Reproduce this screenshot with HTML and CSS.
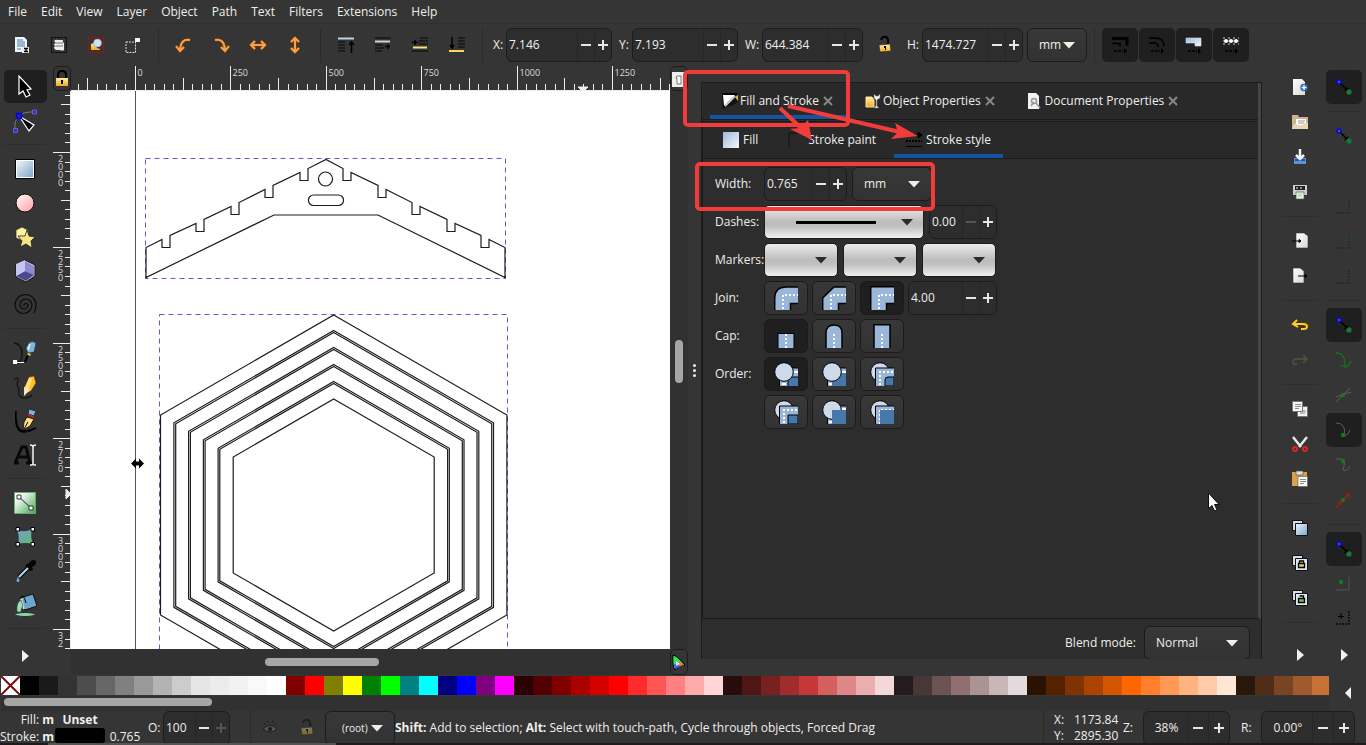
FILE: index.html
```html
<!DOCTYPE html>
<html lang="en">
<head>
<meta charset="utf-8">
<title>Inkscape</title>
<link rel="stylesheet" href="styles.css">
</head>
<body>
<svg class="defs" aria-hidden="true">
  <defs>
    <linearGradient id="g-blue" x1="0" y1="0" x2="1" y2="1"><stop offset="0" stop-color="#9db9db"/><stop offset="1" stop-color="#f4f8fc"/></linearGradient>
    <linearGradient id="g-rect" x1="0" y1="0" x2="1" y2="1"><stop offset="0" stop-color="#eef3f8"/><stop offset="1" stop-color="#7fa6cc"/></linearGradient>
    <linearGradient id="g-pink" x1="0" y1="0" x2="1" y2="1"><stop offset="0" stop-color="#fff"/><stop offset="1" stop-color="#ff9aa2"/></linearGradient>
    <linearGradient id="g-green" x1="0" y1="0" x2="1" y2="1"><stop offset="0.2" stop-color="#fff"/><stop offset="1" stop-color="#3fa64c"/></linearGradient>
    <linearGradient id="g-mesh" x1="0" y1="0" x2="1" y2="1"><stop offset="0" stop-color="#6fa0d8"/><stop offset="1" stop-color="#63b96a"/></linearGradient>
    <linearGradient id="g-gold" x1="0" y1="0" x2="0" y2="1"><stop offset="0" stop-color="#fff0a8"/><stop offset="1" stop-color="#f0a81c"/></linearGradient>
    <linearGradient id="g-page" x1="0" y1="0" x2="1" y2="1"><stop offset="0" stop-color="#fff"/><stop offset="1" stop-color="#d8d8d4"/></linearGradient>
  </defs>
  <symbol id="minus" viewBox="0 0 12 12"><path d="M1 6h10" stroke="currentColor" stroke-width="2"/></symbol>
  <symbol id="plus" viewBox="0 0 12 12"><path d="M1 6h10M6 1v10" stroke="currentColor" stroke-width="2"/></symbol>
  <symbol id="caret" viewBox="0 0 12 8"><path d="M0 1h12L6 7.500z" fill="currentColor"/></symbol>
  <symbol id="more" viewBox="0 0 24 24"><path d="M9 6l7 6-7 6z" fill="#f2f2f2"/></symbol>
  <symbol id="cross" viewBox="0 0 10 10"><path d="M1 1l8 8M9 1L1 9" stroke="#888" stroke-width="2"/></symbol>
  <symbol id="snap" viewBox="0 0 24 24"><path d="M9 9l7 7" stroke="#000" stroke-width="1.500"/><path d="M17 17l-5-1 4-4z"/><circle cx="7" cy="7" r="2" fill="#3a4fd0" stroke="#0a08d8" stroke-width="1.500"/><circle cx="17" cy="17" r="2" fill="#2f6a78" stroke="#107a1c" stroke-width="1.500"/></symbol>
  <symbol id="lock-open" viewBox="0 0 20 20"><path d="M6 5q1-4 5-3 3 1 2 7" fill="none" stroke="#000" stroke-width="2"/><path d="M4 10l11-1 1 7-11 1z" fill="url(#g-gold)" stroke="#222" stroke-width=".6"/><path d="M9 11h2v4h-1v-2h-1z" fill="#000"/></symbol>
  <symbol id="corner" viewBox="0 0 24 24"><path d="M4 19h13V6" fill="none" stroke="#262626" stroke-width="1.500" stroke-dasharray="2 1"/></symbol>
</svg>

<div class="app">
  <nav class="menubar">
    <button>File</button><button>Edit</button><button>View</button><button>Layer</button><button>Object</button><button>Path</button><button>Text</button><button>Filters</button><button>Extensions</button><button>Help</button>
  </nav>

  <div class="toolbar">
    <div class="icon-row">
      <button aria-label="Select all"><svg viewBox="0 0 24 24"><path d="M5 4h9l3 3v12H5z" fill="#f2f5f8"/><path d="M7 7h6M7 9h8M7 11h8M7 13h8M7 16h4" stroke="#7fa2ca" stroke-width="1.300"/><path d="M12 14h7v6h-7z" fill="#eee"/><path d="M14 15.500h4M14 18.500h4M16 15v4" stroke="#000" stroke-width="1.300"/></svg></button>
      <button aria-label="Select all in all layers"><svg viewBox="0 0 24 24"><path d="M4.500 4.500h15v15h-15z" fill="none" stroke="#000" stroke-dasharray="2 1"/><path d="M7 8q2-2 4-1h5q-1 2 1 3v7q-2 1-4 0H9q-2-1-2-3l2-1q-2 0-2-2l2-1z" fill="#eee"/><path d="M9 10h7M9 13h7" stroke="#777"/></svg></button>
      <button aria-label="Deselect"><svg viewBox="0 0 24 24"><path d="M4.500 4.500h15v15h-15z" fill="none" stroke="#d00000" stroke-dasharray="2 1"/><path d="M7 11l3-1 3 5 3 1v1H7z" fill="url(#g-gold)"/><circle cx="13.500" cy="10" r="4" fill="#d5e1f0" stroke="#8098b0" stroke-width=".5"/></svg></button>
      <button aria-label="Toggle selection"><svg viewBox="0 0 24 24"><path d="M5 9h9.500v10.500H5z" fill="none" stroke="#ddd" stroke-dasharray="2 1"/><path d="M14 5h5v4h-5z" fill="#f5f5f5"/></svg></button>
    </div>
    <i class="vsep"></i>
    <div class="icon-row orange">
      <button aria-label="Rotate left"><svg viewBox="0 0 24 24"><path class="edge-line" d="M18 7q-9-2-10 10M4 13l4 5 4-4"/><path d="M18 7q-9-2-10 10M4 13l4 5 4-4"/></svg></button>
      <button aria-label="Rotate right"><svg viewBox="0 0 24 24"><path class="edge-line" d="M6 7q9-2 10 10M12 14l4 4 4-5"/><path d="M6 7q9-2 10 10M12 14l4 4 4-5"/></svg></button>
      <button aria-label="Flip horizontal"><svg viewBox="0 0 24 24"><path class="edge-line" d="M5 12h14M9 8l-4 4 4 4M15 8l4 4-4 4"/><path d="M5 12h14M9 8l-4 4 4 4M15 8l4 4-4 4"/></svg></button>
      <button aria-label="Flip vertical"><svg viewBox="0 0 24 24"><path class="edge-line" d="M12 5v14M8 9l4-4 4 4M8 15l4 4 4-4"/><path d="M12 5v14M8 9l4-4 4 4M8 15l4 4 4-4"/></svg></button>
    </div>
    <i class="vsep"></i>
    <div class="icon-row">
      <button aria-label="Raise to top"><svg viewBox="0 0 24 24"><path d="M4 9h7M4 12h7M4 15h7M4 18h7" stroke="#1d1d1d" stroke-width="2"/><path d="M4 5.500h16" stroke="#bcd3ee" stroke-width="2"/><path d="M17.500 20V10M15 12l2.500-3 2.500 3" fill="none" stroke="#000" stroke-width="1.500"/></svg></button>
      <button aria-label="Raise"><svg viewBox="0 0 24 24"><path d="M4 5h16M4 12h8M4 15h9M4 18h7" stroke="#1d1d1d" stroke-width="2"/><path d="M4 8.500h15" stroke="#c9d6e4" stroke-width="2"/><path d="M14 13.500h5M17 11v5" stroke="#000" stroke-width="1.500"/></svg></button>
      <button aria-label="Lower"><svg viewBox="0 0 24 24"><path d="M12 5h8M11 8h9M11 11h9M4 18h16" stroke="#1d1d1d" stroke-width="2"/><path d="M5 14.500h14" stroke="#ffdf70" stroke-width="2"/><path d="M4 9.500h6M7 7v5" stroke="#000" stroke-width="1.500"/></svg></button>
      <button aria-label="Lower to bottom"><svg viewBox="0 0 24 24"><path d="M13 5h7M13 8h7M13 11h7M13 14h7" stroke="#1d1d1d" stroke-width="2"/><path d="M4 18h15" stroke="#ffd45e" stroke-width="2"/><path d="M7 4v10M5 12l2 3 2-3" fill="none" stroke="#000" stroke-width="1.500"/></svg></button>
    </div>
    <i class="vsep"></i>
    <div class="fields">
      <label for="fx">X:</label>
      <span class="spin w106"><input id="fx" value="7.146"><button aria-label="Decrease"><svg><use href="#minus"/></svg></button><button aria-label="Increase"><svg><use href="#plus"/></svg></button></span>
      <label for="fy">Y:</label>
      <span class="spin w106"><input id="fy" value="7.193"><button aria-label="Decrease"><svg><use href="#minus"/></svg></button><button aria-label="Increase"><svg><use href="#plus"/></svg></button></span>
      <label for="fw" class="wide">W:</label>
      <span class="spin w101"><input id="fw" value="644.384"><button aria-label="Decrease"><svg><use href="#minus"/></svg></button><button aria-label="Increase"><svg><use href="#plus"/></svg></button></span>
      <button class="ratio" aria-label="Lock ratio"><svg><use href="#lock-open"/></svg></button>
      <label for="fh" class="height">H:</label>
      <span class="spin w101"><input id="fh" value="1474.727"><button aria-label="Decrease"><svg><use href="#minus"/></svg></button><button aria-label="Increase"><svg><use href="#plus"/></svg></button></span>
      <span class="combo unit"><select aria-label="Unit"><option>mm</option></select><svg class="caret"><use href="#caret"/></svg></span>
    </div>
    <i class="vsep"></i>
    <div class="toggles">
      <button aria-label="Scale stroke"><svg viewBox="0 0 24 24"><path d="M4 5.500h15v7" fill="none" stroke="#000" stroke-width="3"/><path d="M4 10.500h8v3" fill="none" stroke="#000" stroke-width="1.500"/><path d="M6 18h9" stroke="#000" stroke-width="1.500" stroke-dasharray="3 1"/><path d="M16 15l3 3-3 3z"/></svg></button>
      <button aria-label="Scale corners"><svg viewBox="0 0 24 24"><path d="M4 5h6q9 0 9 8M4 10h5q4 0 4 4" fill="none" stroke="#000" stroke-width="1.500"/><path d="M6 18h9" stroke="#000" stroke-width="1.500" stroke-dasharray="3 1"/><path d="M16 15l3 3-3 3z"/></svg></button>
      <button aria-label="Move gradients"><svg viewBox="0 0 24 24"><path d="M4 5h15v8h-6v-3H4z" fill="url(#g-blue)" stroke="#cfe0f2" stroke-width=".6"/><path d="M6 18h9" stroke="#000" stroke-width="1.500" stroke-dasharray="3 1"/><path d="M16 15l3 3-3 3z"/></svg></button>
      <button aria-label="Move patterns"><svg viewBox="0 0 24 24"><path d="M4 5h16M4 11h16" stroke="#ccc" stroke-dasharray="2 3"/><path d="M4 8h16" stroke="#bbb"/><g fill="#fff"><circle cx="7" cy="8" r="2"/><circle cx="12" cy="8" r="2"/><circle cx="17" cy="8" r="2"/></g><path d="M6 18h9" stroke="#000" stroke-width="1.500" stroke-dasharray="3 1"/><path d="M16 15l3 3-3 3z"/></svg></button>
    </div>
  </div>

  <main class="workspace">
    <div class="toolbox">
      <button class="on" aria-label="Selector"><svg viewBox="0 0 24 24"><path d="M6 1v18l4-3 3 6 4-2-3-5 4-1z" fill="#000" stroke="#fff" stroke-width="1.200"/></svg></button>
      <button aria-label="Node"><svg viewBox="0 0 24 24"><path d="M2 21Q0 2 21 3" fill="none" stroke="#777"/><path d="M6 7l15 9-5 6z" fill="#000" stroke="#fff" stroke-width="1.200"/><path d="M3.500 4.500h5v5h-5z" fill="#2424a0" stroke="#0000e8" stroke-width="1.500"/><path d="M19.500 1h4v4h-4zM.5 19.500h4v4h-4z" fill="#333a90" stroke="#6060f0"/></svg></button>
      <i class="hsep"></i>
      <button aria-label="Rectangle"><svg viewBox="0 0 24 24"><path d="M2.500 2.500h19v19h-19z" fill="#fff" stroke="#000"/><path d="M4 4h16v16H4z" fill="url(#g-rect)"/></svg></button>
      <button aria-label="Ellipse"><svg viewBox="0 0 24 24"><circle cx="12" cy="12" r="9" fill="url(#g-pink)" stroke="#111"/></svg></button>
      <button aria-label="Star"><svg viewBox="0 0 24 24"><path d="M3 5l6-3 6 3 1 6-6 5-7-3z" fill="#fff2a0" stroke="#222" stroke-width=".7"/><path d="M14 5l2 6 6 1-4 4 1 7-6-4-6 3 2-6-4-5 7 0z" fill="#f7e487" stroke="#222" stroke-width=".8"/></svg></button>
      <button aria-label="3D box"><svg viewBox="0 0 24 24"><path d="M3 5l9-4 10 5v11l-9 6-10-5z" fill="#dadaf6" stroke="#111"/><path d="M12 2l9 5v9l-9-4z" fill="#8c8ccd"/><path d="M3 17l9-5 9 4-8 6z" fill="#4a4a8c"/><path d="M3 5l9-4v11l-9 5z" fill="#c4c4ee"/></svg></button>
      <button aria-label="Spiral"><svg viewBox="0 0 24 24"><path d="M11 13a2 2 0 0 1 4-1a4 4 0 0 1-8 0a6 6 0 0 1 12 0a8.500 8.500 0 0 1-17 0a10.500 10.500 0 0 1 21 0q0 4-2 8" fill="none" stroke="#0c0c0c" stroke-width="1.200"/></svg></button>
      <i class="hsep"></i>
      <button aria-label="Pen"><svg viewBox="0 0 24 24"><path d="M1 2q8 1 8 10t-4 10" fill="none" stroke="#111" stroke-width="1.500"/><path d="M16 2q3-3 7 0l-2 9-6 1-2-5z" fill="#7fb6d8" stroke="#1b3a50" stroke-width=".6"/><path d="M17 3l-2 6" stroke="#e8f6ff" stroke-width="1.500"/><path d="M15 12l3 1-1 2-3-1z" fill="#ffc42c"/><path d="M15 14l-3 7" stroke="#000" stroke-width="2"/><path d="M2 21.500h9" stroke="#fff"/><path d="M0 19h4v4H0z" fill="#fff"/></svg></button>
      <button aria-label="Pencil"><svg viewBox="0 0 24 24"><path d="M1 4q6-2 4 2t1 8q-2 8 5 9 5 0 8-3" fill="none" stroke="#111" stroke-width="1.200"/><path d="M16 2l5-1 2 7-5 8-7 3 0-6z" fill="#ffbe2e" stroke="#5c3300" stroke-width=".6"/><path d="M16 3l-4 10 4 1 3-10z" fill="#ffe37a"/><path d="M11 12l6 3-6 6z" fill="#f9e6bc"/></svg></button>
      <button aria-label="Calligraphy"><svg viewBox="0 0 24 24"><path d="M3 2q-1 20 8 20 6 0 12-3-6 4-12 4Q1 23 3 2z" fill="#000" stroke="#000" stroke-width="1.500"/><path d="M16 0l7 2-2 5-6-2z" fill="#7fb2d8" stroke="#134"/><path d="M15 6l6 2" stroke="#d01c1c" stroke-width="2"/><path d="M14 8l7 2-4 7-7 4 1-8z" fill="#ffe18a" stroke="#2d1c00"/><path d="M11 20l4-7" stroke="#000"/></svg></button>
      <button aria-label="Text"><svg viewBox="0 0 24 24"><path d="M2 20l7-16h4l4 16M6 14h9M1 20h5M13 20h6" fill="none" stroke="#080808" stroke-width="3"/><path d="M17 2q3 0 3 2v17q0 1-3 1M23 2q-3 0-3 2M23 22q-3 0-3-1" fill="none" stroke="#f5f5f5" stroke-width="1.500"/></svg></button>
      <i class="hsep"></i>
      <button aria-label="Gradient"><svg viewBox="0 0 24 24"><path d="M1.500 1.500h21v21h-21z" fill="url(#g-green)" stroke="#5fae69"/><path d="M6 6l12 11" stroke="#222"/><path d="M4 4h4v4H4zM16 15h4v4h-4z" fill="#fff" stroke="#333"/></svg></button>
      <button aria-label="Mesh"><svg viewBox="0 0 24 24"><path d="M4 5q8 3 15-1-2 8 1 15-8-2-15 0 2-7-1-14z" fill="url(#g-mesh)"/><path d="M3 2.500h3.500V6H3zM18 2.500h3.500V6H18zM3 17.500h3.500V21H3zM18 17.500h3.500V21H18z" fill="#fff" stroke="#000"/></svg></button>
      <button aria-label="Dropper"><svg viewBox="0 0 24 24"><path d="M16 4q3-5 7-2 1 4-4 6l1 3-3 1-5-5 2-2z" fill="#050505"/><path d="M15 9L6 18" stroke="#000" stroke-width="4"/><path d="M15 9L6 18" stroke="#b8d8f0" stroke-width="2"/><path d="M5 18q-3 5 0 5t0-5z" fill="#6fa8e0"/></svg></button>
      <button aria-label="Bucket"><svg viewBox="0 0 24 24"><ellipse cx="12" cy="21.500" rx="10" ry="2" fill="#8fd49c" stroke="#234"/><path d="M7 5l13-4 4 12-12 4z" fill="#6fa5c8" stroke="#111"/><path d="M8 6l3 10" stroke="#cfe8f4" stroke-width="2"/><path d="M8 7q-5 2-4 12h4q0-4 2-6z" fill="#9fe0a8" stroke="#234" stroke-width=".6"/><path d="M8 5q2-6 5 5" fill="none" stroke="#000"/></svg></button>
      <i class="hsep"></i>
      <button class="more" aria-label="More tools"><svg viewBox="0 0 24 24"><use href="#more"/></svg></button>
    </div>

    <section class="canvas-area">
      <button class="mini" aria-label="Lock guides"><svg viewBox="0 0 16 20"><path d="M4 10V6q0-4 4-4t4 4v4" fill="none" stroke="#000" stroke-width="2"/><path d="M2 9h12v8H2z" fill="url(#g-gold)"/><path d="M7 11h2v4H7z"/></svg></button>
      <svg class="ruler-x" id="ruler-x" role="img" aria-label="Horizontal ruler"></svg>
      <button class="mini" aria-label="Toggle page"><svg viewBox="0 0 16 20"><path d="M1 3h15v15H1z" fill="#eee"/><path d="M6 7h4v8H6V9H5V8z" fill="#fff" stroke="#777"/></svg></button>
      <svg class="ruler-y" id="ruler-y" role="img" aria-label="Vertical ruler"></svg>
      <div class="canvas">
        <svg viewBox="71 91 599 558" width="599" height="558">
          <path d="M135.500 91v558" stroke="#555"/>
          <g fill="none" stroke="#5a5ad8" stroke-dasharray="5 4"><path d="M145.500 158.500h360v120h-360z"/><path d="M159.500 314.500h348v400h-348z"/></g>
          <g fill="none" stroke="#1c1c1c" stroke-width="1.200">
            <path d="M146 277.500v-30l16-8v8h8v-12l26-12v8h8v-12l27-13v8h8v-12l26-13v8h8v-12l27-13v8h8v-12l18-9 17 9v12h8v-8l27 13v12h8v-8l26 13v12h8v-8l27 13v12h8v-8l26 12v12h8v-8l16 8v30L378 215H274z"/>
            <circle cx="325.500" cy="179" r="7"/><rect x="308.500" y="195" width="35" height="10.500" rx="5"/>
            <g id="hexagons"></g>
          </g>
          <path d="M131 463.500l5-5v3h3v-3l5 5-5 5v-3h-3v3z"/>
        </svg>
      </div>
      <div class="vscroll"><i></i></div>
      <span></span>
      <div class="hscroll"><i></i></div>
      <button class="mini cms" aria-label="Color management"><svg viewBox="0 0 16 20"><path d="M2 3q3 0 12 10-9 1-10 5-3-4-2-15z" fill="#35e05a" stroke="#000"/><path d="M8 9l5 4-6 2z" fill="#ff6a3a"/><path d="M3 12l5 0 0 3-4 2z" fill="#574dff"/><path d="M5 9l4 3-4 2z" fill="#b6ffea"/></svg></button>
    </section>

    <div class="splitter"><i></i><i></i><i></i></div>

    <aside class="dock">
      <div class="notebook">
        <div class="tabs">
          <div class="tab active"><button><svg viewBox="0 0 16 16"><path d="M0 0h16L1 16z" fill="#000"/><path d="M1 2h12L2 13z" fill="#fff"/><path d="M3 14L13 3l3 0v6q-5 4-13 5z" fill="#111"/><path d="M3 13L13 3" stroke="#ccc" stroke-width="2"/><path d="M13 4l3-2v6z" fill="#f3b229"/></svg>Fill and Stroke</button><button class="close" aria-label="Close"><svg><use href="#cross"/></svg></button></div>
          <div class="tab"><button><svg viewBox="0 0 16 16"><path d="M1 4h6l2 3v7H1z" fill="url(#g-gold)" stroke="#f7e6a6"/><path d="M9 1v4l2 2v6l-2 2h5l-2-2V7l3-2V1l-2 2h-2z" fill="#eee" stroke="#666" stroke-width=".5"/></svg>Object Properties</button><button class="close" aria-label="Close"><svg><use href="#cross"/></svg></button></div>
          <div class="tab"><button><svg viewBox="0 0 16 16"><path d="M1 0h8l3 3v13H1z" fill="#f2f2f2"/><circle cx="7" cy="8" r="2.500" fill="none" stroke="#999" stroke-width="1.500"/><path d="M9 10l4 5M4 13l3-4" stroke="#999" stroke-width="1.500"/></svg>Document Properties</button><button class="close" aria-label="Close"><svg><use href="#cross"/></svg></button></div>
        </div>
        <div class="page">
          <div class="subtabs">
            <button><svg viewBox="0 0 16 16"><path d="M0 0h16v16H0z" fill="url(#g-blue)"/></svg>Fill</button>
            <button><svg viewBox="0 0 16 16"><path d="M1 15V1h14" fill="none" stroke="#101010"/></svg>Stroke paint</button>
            <button class="active"><svg viewBox="0 0 16 16"><path d="M0 3h14M12 0l4 3-4 3z" stroke="#000"/><path d="M0 9h16" stroke="#000" stroke-width="2" stroke-dasharray="2 1"/><path d="M0 14.500h16" stroke="#000"/></svg>Stroke style</button>
          </div>
          <div class="style-form">
            <div class="frow"><label for="sw">Width:</label>
              <span class="spin w83"><input id="sw" value="0.765"><button aria-label="Decrease"><svg><use href="#minus"/></svg></button><button aria-label="Increase"><svg><use href="#plus"/></svg></button></span>
              <span class="combo w80"><select aria-label="Width unit"><option>mm</option></select><svg class="caret"><use href="#caret"/></svg></span></div>
            <div class="frow"><label for="dash">Dashes:</label>
              <button class="light dash" id="dash"><i></i><svg class="caret"><use href="#caret"/></svg></button>
              <span class="spin w68"><input aria-label="Dash offset" value="0.00"><button class="off" aria-label="Decrease"><svg><use href="#minus"/></svg></button><button aria-label="Increase"><svg><use href="#plus"/></svg></button></span></div>
            <div class="frow"><label for="mk">Markers:</label>
              <button class="light" id="mk" aria-label="Start marker"><svg class="caret"><use href="#caret"/></svg></button>
              <button class="light" aria-label="Mid marker"><svg class="caret"><use href="#caret"/></svg></button>
              <button class="light" aria-label="End marker"><svg class="caret"><use href="#caret"/></svg></button></div>
            <div class="frow tight"><label for="jn">Join:</label>
              <button class="opt" id="jn" aria-label="Round join"><svg viewBox="0 0 24 24"><path d="M1 24V12Q1 1 12 1h12v17h-7v6z" fill="#9ab6d8"/><path d="M.7 24V12Q1 1 12 1h12M24 17.500h-7.500V24" fill="none" stroke="#000" stroke-width="1.500"/><path d="M9 23V9h15" fill="none" stroke="#fff" stroke-width="2" stroke-dasharray="2 2"/></svg></button>
              <button class="opt" aria-label="Bevel join"><svg viewBox="0 0 24 24"><path d="M1 24V12L12 1h12v17h-7v6z" fill="#9ab6d8"/><path d="M.7 24V12L12 1h12M24 17.500h-7.500V24" fill="none" stroke="#000" stroke-width="1.500"/><path d="M9 23V9h15" fill="none" stroke="#fff" stroke-width="2" stroke-dasharray="2 2"/></svg></button>
              <button class="opt on" aria-label="Miter join"><svg viewBox="0 0 24 24"><path d="M1 24V1h23v17h-7v6z" fill="#9ab6d8"/><path d="M.7 24V.7H24M24 17.500h-7.500V24" fill="none" stroke="#000" stroke-width="1.500"/><path d="M9 23V9h15" fill="none" stroke="#fff" stroke-width="2" stroke-dasharray="2 2"/></svg></button>
              <span class="spin w89"><input aria-label="Miter limit" value="4.00"><button aria-label="Decrease"><svg><use href="#minus"/></svg></button><button aria-label="Increase"><svg><use href="#plus"/></svg></button></span></div>
            <div class="frow tight"><label for="cp">Cap:</label>
              <button class="opt on" id="cp" aria-label="Butt cap"><svg viewBox="0 0 24 24"><path d="M4 24V9.500h16V24" fill="#9ab6d8" stroke="#000"/><path d="M12 10v14" stroke="#fff" stroke-width="2" stroke-dasharray="2 2"/></svg></button>
              <button class="opt" aria-label="Round cap"><svg viewBox="0 0 24 24"><path d="M4 24V9Q4 1 12 1t8 8v15" fill="#9ab6d8" stroke="#000" stroke-width="1.500"/><path d="M12 10v14" stroke="#fff" stroke-width="2" stroke-dasharray="2 2"/></svg></button>
              <button class="opt" aria-label="Square cap"><svg viewBox="0 0 24 24"><path d="M4 24V.7h16V24" fill="#9ab6d8" stroke="#000" stroke-width="1.500"/><path d="M12 10v14" stroke="#fff" stroke-width="2" stroke-dasharray="2 2"/></svg></button></div>
            <div class="frow tight"><label for="or">Order:</label>
              <button class="opt on" id="or" aria-label="Fill, stroke, markers"><svg viewBox="0 0 24 24"><path d="M5.500 24V6H24v18z" fill="#9ab6d8"/><path d="M5.500 24V6H24" fill="none" stroke="#000"/><path d="M8 22h4M20 10h4" stroke="#fff" stroke-width="2"/><path d="M14 24v-9h10v9z" fill="#4877ab"/><path d="M14 24v-9h10" fill="none" stroke="#000"/><circle cx="10" cy="10" r="9.300" fill="#cddaea" stroke="#000"/></svg></button>
              <button class="opt" aria-label="Stroke, fill, markers"><svg viewBox="0 0 24 24"><path d="M5.500 24V6H24v18z" fill="#9ab6d8"/><path d="M5.500 24V6H24" fill="none" stroke="#000"/><path d="M7 22h3M20 10h4" stroke="#fff" stroke-width="2"/><path d="M10 11h14v13H10z" fill="#4877ab"/><circle cx="10" cy="10" r="9.300" fill="#cddaea" stroke="#000"/></svg></button>
              <button class="opt" aria-label="Fill, markers, stroke"><svg viewBox="0 0 24 24"><circle cx="10" cy="10" r="9.300" fill="#cddaea" stroke="#000"/><path d="M5.500 24V6H24v18z" fill="#9ab6d8"/><path d="M5.500 24V6H24" fill="none" stroke="#000"/><path d="M10 23V10h14" fill="none" stroke="#fff" stroke-width="2" stroke-dasharray="2 2"/><path d="M15 24v-6q0-3 3-3h6v9z" fill="#4877ab" stroke="#000"/></svg></button></div>
            <div class="frow tight"><span></span>
              <button class="opt" aria-label="Markers, fill, stroke"><svg viewBox="0 0 24 24"><circle cx="10" cy="10" r="9.300" fill="#cddaea" stroke="#000"/><path d="M5.500 24V6H24v18z" fill="#9ab6d8"/><path d="M5.500 24V6H24" fill="none" stroke="#000"/><path d="M10 23V10h14" fill="none" stroke="#fff" stroke-width="2" stroke-dasharray="2 2"/><path d="M14 24v-9h10v9z" fill="#4877ab" stroke="#000"/></svg></button>
              <button class="opt" aria-label="Stroke, markers, fill"><svg viewBox="0 0 24 24"><path d="M5.500 24V6H24v18z" fill="#9ab6d8"/><path d="M5.500 24V6H24" fill="none" stroke="#000"/><path d="M7 22h3M20 9h4" stroke="#fff" stroke-width="2"/><circle cx="10" cy="10" r="9.300" fill="#cddaea" stroke="#000"/><path d="M10 10h14v14H10z" fill="#4877ab"/></svg></button>
              <button class="opt" aria-label="Markers, stroke, fill"><svg viewBox="0 0 24 24"><circle cx="10" cy="10" r="9.300" fill="#cddaea" stroke="#000"/><path d="M5.500 24V6H24v18z" fill="#9ab6d8"/><path d="M5.500 24V6H24" fill="none" stroke="#000"/><path d="M9.500 24V9.500H24" fill="none" stroke="#fff" stroke-dasharray="2 2"/><path d="M10 10h14v14H10z" fill="#4877ab"/></svg></button></div>
          </div>
        </div>
      </div>
      <div class="blend"><label for="blend">Blend mode:</label><span class="combo w106"><select id="blend"><option>Normal</option></select><svg class="caret"><use href="#caret"/></svg></span></div>
    </aside>

    <div class="commands">
      <button aria-label="New"><svg viewBox="0 0 24 24"><path d="M5 4h9l3 3v13H5z" fill="url(#g-page)"/><circle cx="16" cy="12.500" r="3.700" fill="#2d68b5"/><path d="M13.500 12.500h5M16 10v5" stroke="#fff" stroke-width="1.300"/></svg></button>
      <button aria-label="Open"><svg viewBox="0 0 24 24"><path d="M4 5h6l1 2h9v12H4z" fill="#c9b48f"/><path d="M8 9h10v6H8z" fill="#fff"/><path d="M10 11h7M10 13h6" stroke="#999"/><path d="M4 19l2-5h3v1h6l1-2h4v6z" fill="#e8d6b5"/></svg></button>
      <button aria-label="Save"><svg viewBox="0 0 24 24"><path d="M6 13h12v6H6z" fill="#5b93d8"/><path d="M7 14h10v2H7z" fill="#24589c"/><path d="M12 4v9M8 10l4 4 4-4" fill="none" stroke="#f2f2f2" stroke-width="2.500"/></svg></button>
      <button aria-label="Print"><svg viewBox="0 0 24 24"><path d="M5 5h14v10H5z" fill="#cfcfcf"/><path d="M7 6h10v4H7z" fill="#222"/><path d="M8 8h2M12 8h2" stroke="#fff"/><path d="M8 12h8v7H8z" fill="#eef5e4" stroke="#555" stroke-width=".7"/><path d="M10 14h4M9 16h5" stroke="#9dcf86"/></svg></button>
      <i class="hsep"></i>
      <button aria-label="Import"><svg viewBox="0 0 24 24"><path d="M8 4h8l4 3v12H8z" fill="url(#g-page)" stroke="#333" stroke-width=".6"/><path d="M4 12h9M11 10.500l2 1.500-2 1.500z" stroke="#000"/></svg></button>
      <button aria-label="Export"><svg viewBox="0 0 24 24"><path d="M5 4h7l4 3v12H5z" fill="url(#g-page)" stroke="#333" stroke-width=".6"/><path d="M10 12h9M17 10.500l2 1.500-2 1.500z" stroke="#000"/></svg></button>
      <i class="hsep"></i>
      <button aria-label="Undo"><svg viewBox="0 0 24 24"><path d="M9 7l-4 4 5 3M5 11h10q4 0 4 2.500T15 16h-2" fill="none" stroke="#4f3c00" stroke-width="3.500"/><path d="M9 7l-4 4 5 3M5 11h10q4 0 4 2.500T15 16h-2" fill="none" stroke="#f5cf36" stroke-width="2"/></svg></button>
      <button aria-label="Redo"><svg viewBox="0 0 24 24"><path d="M15 7l4 4-4 4M19 11H9q-4 0-4 3t4 2" fill="none" stroke="#48583e" stroke-width="1.500"/></svg></button>
      <i class="hsep"></i>
      <button aria-label="Copy"><svg viewBox="0 0 24 24"><path d="M9.500 9.500h10v10h-10z" fill="#f2f2f0" stroke="#777"/><path d="M12 14h6M12 16h5" stroke="#888"/><path d="M4.500 4.500h10v10h-10z" fill="#f8f8f6" stroke="#777"/><path d="M7 7.500h6M7 9.500h6M7 11.500h4" stroke="#888"/></svg></button>
      <button aria-label="Cut"><svg viewBox="0 0 24 24"><path d="M5 5l8 10M19 5l-8 10" stroke="#e8e8e8" stroke-width="2.500"/><circle cx="7" cy="17" r="2" fill="none" stroke="#e02424" stroke-width="2"/><circle cx="17" cy="17" r="2" fill="none" stroke="#e02424" stroke-width="2"/></svg></button>
      <button aria-label="Paste"><svg viewBox="0 0 24 24"><path d="M4 5h15v14H4z" fill="#d9a04c"/><path d="M8 4h7v4H8z" fill="#ddd" stroke="#555" stroke-width=".7"/><path d="M10 9.500h9.500v10H10z" fill="#fafaf8" stroke="#666" stroke-width=".7"/><path d="M12 12.500h6M12 14.500h6M12 16.500h4" stroke="#888"/></svg></button>
      <i class="hsep"></i>
      <button aria-label="Duplicate"><svg viewBox="0 0 24 24"><path d="M4.500 4.500h10v10h-10z" fill="#cfdff0" stroke="#111"/><path d="M7.500 7.500h12v12h-12z" fill="url(#g-rect)" stroke="#111"/></svg></button>
      <button aria-label="Clone"><svg viewBox="0 0 24 24"><path d="M4.500 4.500h10v10h-10z" fill="#cfdff0" stroke="#111"/><path d="M7.500 7.500h12v12h-12z" fill="#dbe8f5" stroke="#111"/><path d="M11.500 13v-3h4v3M10.500 12.500h6v4h-6z" fill="#f4c944" stroke="#000" stroke-width="1.300"/></svg></button>
      <button aria-label="Unlink clone"><svg viewBox="0 0 24 24"><path d="M4.500 4.500h10v10h-10z" fill="#cfdff0" stroke="#111"/><path d="M7.500 7.500h12v12h-12z" fill="#dbe8f5" stroke="#111"/><path d="M11.500 10h4v3" fill="none" stroke="#000" stroke-width="1.300"/><path d="M10.500 12.500h6v4h-6z" fill="#76c043" stroke="#000" stroke-width="1.300"/></svg></button>
      <i class="hsep"></i>
      <button class="more" aria-label="More commands"><svg><use href="#more"/></svg></button>
    </div>

    <div class="snapbar">
      <button class="on" aria-label="Snapping"><svg><use href="#snap"/></svg></button>
      <i class="hsep"></i>
      <button aria-label="Snap bounding boxes"><svg><use href="#snap"/></svg></button>
      <button aria-label="Snap edges"><svg viewBox="0 0 24 24"><path d="M4 17h13V3" fill="none" stroke="#2a3d2a" stroke-dasharray="2 1"/></svg></button>
      <button aria-label="Snap corners"><svg viewBox="0 0 24 24"><use href="#corner"/><circle cx="17" cy="18" r="2" fill="none" stroke="#1f4a25"/></svg></button>
      <button aria-label="Snap edge midpoints"><svg viewBox="0 0 24 24"><use href="#corner"/><circle cx="17" cy="9" r="2" fill="none" stroke="#1f4a25"/></svg></button>
      <button aria-label="Snap centers"><svg viewBox="0 0 24 24"><use href="#corner"/><circle cx="8" cy="9" r="1.500" fill="#1f4a25"/></svg></button>
      <i class="hsep"></i>
      <button class="on" aria-label="Snap nodes"><svg><use href="#snap"/></svg></button>
      <button aria-label="Snap paths"><svg viewBox="0 0 24 24"><path d="M4 5q10 0 9 14 4 0 6-6M8 17l5 2" fill="none" stroke="#18721f" stroke-width="1.300"/></svg></button>
      <button aria-label="Snap intersections"><svg viewBox="0 0 24 24"><path d="M4 19L18 5M4 14l15-5" stroke="#5e5e5e"/><circle cx="11" cy="12" r="2" fill="#147a20"/></svg></button>
      <button class="on" aria-label="Snap cusp nodes"><svg viewBox="0 0 24 24"><path d="M4 5q11 0 8 13 5-1 6-6" fill="none" stroke="#5e5e5e"/><circle cx="11" cy="17" r="2.200" fill="#147a20"/></svg></button>
      <button aria-label="Snap smooth nodes"><svg viewBox="0 0 24 24"><path d="M4 6h6q4 2 1 11 4 2 7-4" fill="none" stroke="#5e5e5e"/><circle cx="11" cy="8" r="2.200" fill="#147a20"/></svg></button>
      <button aria-label="Snap line midpoints"><svg viewBox="0 0 24 24"><path d="M4 19L18 5" stroke="#555"/><path d="M5 19l4-7M8 18l2-5M13 11l2-6M16 10l2-6" stroke="#a11616" stroke-width="1.300"/><circle cx="11" cy="12" r="2" fill="#147a20"/></svg></button>
      <i class="hsep"></i>
      <button class="on" aria-label="Snap others"><svg><use href="#snap"/></svg></button>
      <button aria-label="Snap object centers"><svg viewBox="0 0 24 24"><path d="M4 18h13V5" fill="none" stroke="#555"/><circle cx="9" cy="10" r="2.200" fill="#147a20"/></svg></button>
      <button aria-label="Snap rotation centers"><svg viewBox="0 0 24 24"><path d="M4 17h13V4" fill="none" stroke="#080808" stroke-width="1.500" stroke-dasharray="2 1"/><path d="M6 9.500h6M9 6v6" stroke="#000"/></svg></button>
      <button class="more" aria-label="More snapping"><svg><use href="#more"/></svg></button>
    </div>
  </main>

  <div class="palette">
    <div class="swatches" id="swatches"></div>
    <button aria-label="Palette menu"><svg viewBox="0 0 8 14"><path d="M7 1v12L1 7z" fill="#f2f2f2"/></svg></button>
    <div class="pscroll"><i></i></div>
  </div>

  <footer class="status">
    <div class="paint"><span>Fill: <b>m</b></span><b class="unset">Unset</b><i></i><span>Stroke: <b>m</b></span><i class="chip"></i><span class="sw">0.765</span></div>
    <label for="op">O:</label>
    <span class="spin w67"><input id="op" value="100"><button aria-label="Decrease"><svg><use href="#minus"/></svg></button><button class="off" aria-label="Increase"><svg><use href="#plus"/></svg></button></span>
    <i class="vsep"></i>
    <button class="flat" aria-label="Layer visibility"><svg viewBox="0 0 20 20"><path d="M3 11q7-7 14 0-7 6-14 0z" fill="#555" stroke="#1f1f1f"/><circle cx="10" cy="11" r="2" fill="#1a1a1a"/><path d="M5 7L4 5M8 5V3M12 5l1-2M15 7l1-2" stroke="#1f1f1f"/></svg></button>
    <button class="flat dim" aria-label="Layer lock"><svg><use href="#lock-open"/></svg></button>
    <span class="combo layer"><select aria-label="Layer"><option>(root)</option></select><svg class="caret"><use href="#caret"/></svg></span>
    <p><b>Shift:</b> Add to selection; <b>Alt:</b> Select with touch-path, Cycle through objects, Forced Drag</p>
    <i class="vsep"></i>
    <div class="coords"><span>X:</span><span>1173.84</span><span>Y:</span><span>2895.30</span></div>
    <label for="zm">Z:</label>
    <span class="spin big w87"><input id="zm" value="38%"><button aria-label="Zoom out"><svg><use href="#minus"/></svg></button><button aria-label="Zoom in"><svg><use href="#plus"/></svg></button></span>
    <label for="rt">R:</label>
    <span class="spin big w94"><input id="rt" value="0.00°"><button aria-label="Rotate left"><svg><use href="#minus"/></svg></button><button aria-label="Rotate right"><svg><use href="#plus"/></svg></button></span>
  </footer>
  <div class="edge"></div>

  <svg class="annotations" viewBox="0 0 1366 745" aria-hidden="true">
    <g fill="none" stroke="#f23c3c" stroke-width="4"><rect x="685" y="72" width="163" height="53" rx="3"/><rect x="697" y="164" width="236" height="45" rx="3"/><path d="M780 108l22 21M788 106l112 26"/></g>
    <g fill="#f23c3c"><path d="M812 140l-22-11 10-1 8-8z"/><path d="M918 136l-27 3 7-7-3-9z"/></g>
    <path d="M1208.500 493v15.500l3.500-3 2.500 5.500 2.500-1-2.500-5.500h4.500z" fill="#fff" stroke="#111"/>
  </svg>
</div>
<script src="app.js"></script>
</body>
</html>
```

FILE: styles.css
```css
* { box-sizing: border-box; }
body { margin: 0; background: #353535; color: #eeeeec; font: 12px/16px "Open Sans", "Noto Sans", sans-serif; }
button, input, select { font: inherit; color: inherit; margin: 0; padding: 0; border: 0; background: none; }
button { display: flex; align-items: center; justify-content: center; }
i { display: block; }
p { margin: 0; }
.defs { position: absolute; width: 0; height: 0; }
.app { position: relative; display: flex; flex-direction: column; min-height: 100vh; overflow: hidden; }
.annotations { position: absolute; left: 0; top: 0; width: 1366px; height: 745px; pointer-events: none; }

.menubar { display: flex; height: 24px; padding-left: 1px; border-bottom: 1px solid #2f2f2f; }
.menubar button { padding: 0 7px; }

.toolbar { display: flex; align-items: center; height: 42px; padding: 0 4px; }
.icon-row { display: flex; gap: 1px; }
.icon-row button { width: 36px; height: 34px; }
.icon-row svg, .toggles svg { width: 24px; height: 24px; }
.orange path { fill: none; stroke: #f9a04a; stroke-width: 2; }
.orange .edge-line { stroke: #8a4300; stroke-width: 3; }
.vsep { width: 1px; height: 34px; margin: 0 7px; background: #2b2b2b; }
.fields { display: flex; align-items: center; padding-left: 3px; }
.fields label { width: 20px; padding-left: 7px; white-space: nowrap; }
.fields label:first-child { width: 13px; padding-left: 0; }
.fields .wide { width: 24px; }
.fields .height { width: 15px; padding-left: 0; }
.ratio { width: 44px; }
.ratio svg { width: 20px; height: 20px; }
.toggles { display: flex; gap: 1px; }
.toggles button { width: 36px; height: 34px; border-radius: 5px; background: #1f1f1f; }

.spin { display: flex; height: 34px; border: 1px solid #1d1d1d; border-radius: 6px; background: #2d2d2d; overflow: hidden; }
.spin input { flex: 1; width: 0; min-width: 0; padding-left: 2px; outline: 0; }
.spin button { width: 17px; border-left: 1px solid #262626; color: #e6e6e6; }
.spin svg { width: 12px; height: 12px; }
.spin .off { color: #555; }
.big button { width: 21px; }
.big input { text-align: center; }
.w67 { width: 67px; } .w68 { width: 68px; } .w80 { width: 80px; } .w83 { width: 83px; } .w87 { width: 87px; }
.w89 { width: 89px; } .w94 { width: 94px; } .w101 { width: 101px; } .w106 { width: 106px; }
.combo { display: grid; height: 34px; border: 1px solid #1b1b1b; border-radius: 6px; background: linear-gradient(#383838, #323232); }
.combo select { grid-area: 1 / 1; width: 100%; padding-left: 11px; appearance: none; outline: 0; }
.combo .caret { grid-area: 1 / 1; place-self: center end; margin-right: 11px; pointer-events: none; }
.caret { width: 12px; height: 8px; }
.unit { width: 60px; margin-left: 4px; }

.workspace { flex: 1; display: grid; grid-template-columns: 53px 635fr 13px 561fr 56px 48px; min-height: 609px; }
.toolbox, .commands, .snapbar { display: flex; flex-direction: column; align-items: center; gap: 1px; padding: 4px 0 3px; }
.toolbox { padding-right: 3px; }
.toolbox button { width: 43px; height: 33px; border-radius: 5px; }
.toolbox svg { width: 24px; height: 24px; }
.hsep { width: 43px; height: 13px; background: linear-gradient(#2e2e2e, #2e2e2e) center / 100% 1px no-repeat; }
.on { background: #1f1f1f; }
.commands { padding-left: 20px; }
.snapbar { padding-left: 4px; }
.commands button, .snapbar button { width: 36px; height: 34px; border-radius: 5px; }
.commands svg, .snapbar svg { width: 24px; height: 24px; }
.commands .hsep, .snapbar .hsep { width: 36px; }
.toolbox .more, .commands .more, .snapbar .more { margin-top: auto; }

.canvas-area { display: grid; grid-template: 25px 1fr 26px / 18px 1fr 18px; }
.canvas-area > svg { width: 100%; height: 100%; overflow: hidden; }
.mini { border: 1px solid #1d1d1d; border-radius: 5px; }
.mini svg { width: 16px; height: 20px; }
.ruler-x text, .ruler-y text { font-size: 9px; fill: #dcdcdc; }
.ruler-x path, .ruler-y path { stroke: #eee; }
.canvas { position: relative; background: #fff; overflow: hidden; }
.canvas svg { display: block; }
.vscroll, .hscroll { display: flex; background: #313131; }
.vscroll { justify-content: center; padding-top: 249px; }
.vscroll i { width: 8px; height: 43px; border-radius: 4px; background: #a6a6a4; }
.hscroll { padding: 9px 0 0 194px; }
.hscroll i { width: 114px; height: 8px; border-radius: 4px; background: #a6a6a4; }
.splitter { display: flex; flex-direction: column; align-items: center; justify-content: center; gap: 2px; }
.splitter i { width: 3px; height: 3px; border-radius: 2px; background: #eee; }

.dock { display: flex; flex-direction: column; margin: 16px 0 16px; border: solid #1b1b1b; border-width: 1px 1px 0; background: #2d2d2d; overflow: hidden; }
.notebook { flex: 1; display: flex; flex-direction: column; border-bottom: 1px solid #1b1b1b; border-right: 3px solid #454545; }
.tabs { display: flex; height: 37px; padding-left: 8px; gap: 5px; background: #292929; border-bottom: 1px solid #1b1b1b; }
.tab { display: flex; padding: 4px 15px 0 12px; border-bottom: 4px solid transparent; }
.tab.active, .subtabs .active { border-bottom-color: #1553a3; }
.tab button, .subtabs button { white-space: nowrap; gap: 2px; }
.tab button svg, .subtabs svg { width: 16px; height: 16px; }
.tab .close { margin-left: 4px; }
.tab .close svg { width: 10px; height: 10px; }
.page { flex: 1; margin-top: 1px; border: solid #1b1b1b; border-width: 1px 0 0 1px; }
.subtabs { display: flex; gap: 6px; height: 37px; padding-left: 8px; background: #292929; border-bottom: 1px solid #1b1b1b; }
.subtabs button { gap: 4px; padding: 4px 12px 0; border-bottom: 4px solid transparent; }
.style-form { display: flex; flex-direction: column; gap: 4px; padding: 8px 12px; }
.frow { display: flex; align-items: center; gap: 5px; height: 34px; }
.frow.tight { gap: 4px; }
.frow > :first-child { width: 49px; margin-right: -5px; white-space: nowrap; }
.frow.tight > :first-child { margin-right: -4px; }
.light { justify-content: flex-end; width: 74px; height: 34px; padding-right: 10px; border: 1px solid #1b1b1b; border-radius: 5px; background: linear-gradient(#ececec, #bcbcbc 50%, #c2c2c2 65%, #f0f0f0); color: #2c2c2c; }
.dash { width: 160px; }
.dash i { width: 80px; height: 3px; margin-right: 25px; background: #000; }
.opt { width: 44px; height: 34px; border: 1px solid #1b1b1b; border-radius: 6px; background: linear-gradient(#383838, #323232); }
.opt.on { background: #1f1f1f; }
.opt svg { width: 24px; height: 24px; }
.blend { display: flex; align-items: center; justify-content: flex-end; gap: 8px; height: 40px; padding: 7px 11px 0 0; }

.palette { display: grid; grid-template-columns: 1fr 37px; grid-template-rows: 21px 15px; padding-left: 1px; }
.swatches { display: flex; height: 20px; padding-top: 1px; overflow: hidden; }
.swatches i, .swatches svg { flex: 0 0 19px; width: 19px; height: 19px; }
.palette button { grid-row: 1 / 3; grid-column: 2; }
.palette button svg { width: 8px; height: 14px; }
.pscroll { padding: 2px 3px; background: #313131; }
.pscroll i { width: 208px; height: 8px; border-radius: 4px; background: #a6a6a4; }

.status { display: flex; align-items: center; height: 32px; padding-top: 2px; }
.paint { display: grid; grid-template-columns: 54px 50px 38px; column-gap: 1px; justify-items: end; width: 148px; height: 34px; line-height: 17px; white-space: nowrap; }
.paint .unset { justify-self: center; }
.paint .chip { width: 50px; height: 15px; border-radius: 3px; background: #000; }
.paint .sw { justify-self: center; }
.status > label { width: 15px; }
.status > p { flex: 1; white-space: nowrap; }
.status > .vsep { margin: 0 0 0 20px; }
.flat { width: 37px; }
.flat svg { width: 20px; height: 20px; }
.dim { opacity: .4; }
.layer { width: 70px; font-size: 10px; }
.layer select { padding-left: 16px; }
.coords { display: grid; grid-template-columns: 20px 39px; margin: 0 10px; line-height: 16px; }
.status .big { margin: 0 11px 0 5px; }
.edge { height: 2px; background: linear-gradient(90deg, #1f1b1b 48px, #555 48px, #555 336px, #1f1b1b 336px); }
```

FILE: app.js
```js
const NS = "http://www.w3.org/2000/svg";
const add = (parent, name, attrs, text) => {
  const el = document.createElementNS(NS, name);
  for (const key in attrs) el.setAttribute(key, attrs[key]);
  if (text !== undefined) el.textContent = text;
  parent.appendChild(el);
  return el;
};

const STEP = 95.4;

// Horizontal ruler: one label each 250 units, ten divisions between labels.
const rulerX = document.getElementById("ruler-x");
const widthX = rulerX.getBoundingClientRect().width;
let dx = "";
for (let i = -6; ; i++) {
  const x = Math.floor(64.5 + i * STEP / 10) + 0.5;
  if (x > widthX) break;
  const top = i % 10 === 0 ? 0 : i % 5 === 0 ? 12 : 18;
  dx += `M${x} ${top}V25`;
  if (i % 10 === 0 && x + 26 < widthX) add(rulerX, "text", { x: x + 2, y: 10 }, i * 25);
}
add(rulerX, "path", { d: dx + "M0 24.5H" + widthX });
add(rulerX, "path", { d: "M507 21h10l-5 5z", fill: "#eee" });

// Vertical ruler: each label is written one digit below the other.
const rulerY = document.getElementById("ruler-y");
const heightY = rulerY.getBoundingClientRect().height;
let dy = "";
for (let i = -6; ; i++) {
  const y = Math.floor(61.5 + i * STEP / 10) + 0.5;
  if (y > heightY) break;
  const left = i % 10 === 0 ? 0 : i % 5 === 0 ? 8 : 12;
  dy += `M${left} ${y}H18`;
  if (i % 10 === 0) {
    const room = Math.min(4, Math.floor((heightY - y - 1) / 8));
    const digits = String(2000 + i * 25).slice(0, room);
    const at = [...digits].map((d, n) => y + 9 + n * 8);
    add(rulerY, "text", { x: at.map(() => 5).join(" "), y: at.join(" ") }, digits);
  }
}
add(rulerY, "path", { d: dy + "M17.5 0V" + heightY });
add(rulerY, "path", { d: "M13 398l5 5-5 5z", fill: "#eee" });

// Nested hexagons around one centre.
const hexagons = document.getElementById("hexagons");
[200, 184.5, 182.5, 167.5, 165.5, 150.5, 148.5, 133.5, 131.5, 116].forEach(r => {
  const points = [];
  for (let k = 0; k < 6; k++) {
    const a = Math.PI / 3 * k;
    points.push((333.7 + r * Math.sin(a)).toFixed(1) + "," + (515 - r * Math.cos(a)).toFixed(1));
  }
  add(hexagons, "polygon", { points: points.join(" ") });
});

const colors = ("000 1a1a1a 333 4d4d4d 666 808080 999 b3b3b3 ccc e6e6e6 ececec f2f2f2 f9f9f9 fff " +
  "800000 f00 808000 ff0 008000 0f0 008080 0ff 000080 00f 800080 f0f " +
  "2b0000 500 800000 a00 d40000 f00 ff2a2a f55 ff8080 faa ffd5d5 " +
  "280b0b 501616 782121 a02c2c c83737 d35f5f de8787 e9afaf f4d7d7 " +
  "241c1c 483737 6c5353 916f6f ac9393 c8b7b7 e3dbdb " +
  "2b1100 520 803300 a40 d45500 f60 ff7f2a f95 ffb380 fca ffe6d5 " +
  "28170b 502d16 784421 a05a2c c87137").split(" ");
const swatches = document.getElementById("swatches");
const none = add(swatches, "svg", { viewBox: "0 0 19 19" });
add(none, "path", { d: "M0 0h19v19H0z", fill: "#fff" });
add(none, "path", { d: "M0 0l19 19M19 0L0 19", stroke: "#7a0c0c", "stroke-width": 2 });
colors.forEach(c => {
  const el = document.createElement("i");
  el.style.background = "#" + c;
  swatches.appendChild(el);
});
```
